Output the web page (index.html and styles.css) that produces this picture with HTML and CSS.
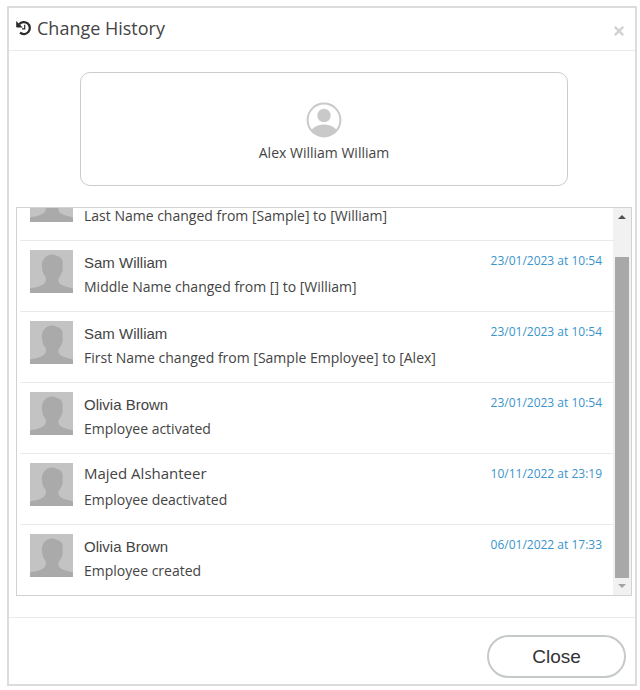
FILE: index.html
```html
<!DOCTYPE html>
<html lang="en">
<head>
  <meta charset="utf-8">
  <title>Change History</title>
  <meta name="viewport" content="width=device-width, initial-scale=1.0">
  <link rel="stylesheet" href="styles.css">
</head>
<body>
  <svg width="0" height="0" class="sprite" aria-hidden="true">
    <symbol id="avatar" viewBox="0 0 43 43">
      <rect width="43" height="43" fill="#c3c3c3"/>
      <path fill="#aaa" d="M0 43v-4.500c4-1 9-1.500 12-3.500 4-2 4.500-5 3.500-8.500-2-2-3-4.500-3.300-7.500C10.500 11 15 5 21.500 4.500c2.500 0 4 .5 5 1.500 5 .5 7 4.500 6 9.500.5 4 0 7-1.500 9-1 2-2 3-2.500 4-.5 3 .5 4.500 2.500 6 3 2 8 2.500 12 4V43z"/>
    </symbol>
  </svg>

  <div class="modal" role="dialog" aria-labelledby="modal-title">
    <header class="modal-header">
      <h1 class="modal-title" id="modal-title">
        <svg class="history-icon" viewBox="0 0 16 16" aria-hidden="true">
          <path fill="none" stroke="#2b2b2b" stroke-width="2.300" d="M3.200 4.200A6 6 0 1 1 4 12.700"/>
          <path fill="#2b2b2b" d="M.2 1.100v5.600q0 .7.8.7h5.800z"/>
          <path fill="none" stroke="#2b2b2b" stroke-width="1.200" d="M8.700 4.800v4H6"/>
        </svg>
        Change History
      </h1>
      <button class="dismiss" type="button" aria-label="Dismiss">
        <svg viewBox="0 0 10 10" width="10" height="10">
          <path stroke="#d2d2d2" stroke-width="2.400" d="M.8.8l8.400 8.400M9.200.8L.8 9.200"/>
        </svg>
      </button>
    </header>

    <main class="modal-body">
      <section class="employee">
        <svg class="employee-icon" viewBox="0 0 36 36" aria-hidden="true">
          <clipPath id="ring"><circle cx="18" cy="18" r="16.500"/></clipPath>
          <circle cx="18" cy="18" r="16.400" fill="#fff" stroke="#c9c9c9" stroke-width="2"/>
          <circle cx="18" cy="13.500" r="6.700" fill="#c9c9c9"/>
          <ellipse cx="18" cy="33" rx="14" ry="10.500" fill="#c9c9c9" clip-path="url(#ring)"/>
        </svg>
        <p class="employee-name">Alex William William</p>
      </section>

      <div class="history">
        <ul class="history-list">
          <li class="entry">
            <svg class="avatar"><use href="#avatar"/></svg>
            <div class="entry-text">
              <p class="entry-detail">Last Name changed from [Sample] to [William]</p>
            </div>
          </li>
          <li class="entry">
            <svg class="avatar"><use href="#avatar"/></svg>
            <div class="entry-text">
              <p class="entry-name">Sam William</p>
              <p class="entry-detail">Middle Name changed from [] to [William]</p>
            </div>
            <time class="entry-date">23/01/2023 at 10:54</time>
          </li>
          <li class="entry">
            <svg class="avatar"><use href="#avatar"/></svg>
            <div class="entry-text">
              <p class="entry-name">Sam William</p>
              <p class="entry-detail">First Name changed from [Sample Employee] to [Alex]</p>
            </div>
            <time class="entry-date">23/01/2023 at 10:54</time>
          </li>
          <li class="entry">
            <svg class="avatar"><use href="#avatar"/></svg>
            <div class="entry-text">
              <p class="entry-name">Olivia Brown</p>
              <p class="entry-detail">Employee activated</p>
            </div>
            <time class="entry-date">23/01/2023 at 10:54</time>
          </li>
          <li class="entry">
            <svg class="avatar"><use href="#avatar"/></svg>
            <div class="entry-text">
              <p class="entry-name entry-name-open">Majed Alshanteer</p>
              <p class="entry-detail">Employee deactivated</p>
            </div>
            <time class="entry-date">10/11/2022 at 23:19</time>
          </li>
          <li class="entry">
            <svg class="avatar"><use href="#avatar"/></svg>
            <div class="entry-text">
              <p class="entry-name">Olivia Brown</p>
              <p class="entry-detail">Employee created</p>
            </div>
            <time class="entry-date">06/01/2022 at 17:33</time>
          </li>
        </ul>
        <div class="scrollbar" aria-hidden="true">
          <svg class="arrow" viewBox="0 0 8 4"><path fill="#505050" d="M0 4l4-4 4 4z"/></svg>
          <div class="thumb"></div>
          <svg class="arrow" viewBox="0 0 8 4"><path fill="#a3a3a3" d="M0 0h8L4 4z"/></svg>
        </div>
      </div>
    </main>

    <footer class="modal-footer">
      <button class="close-button" type="button">Close</button>
    </footer>
  </div>
</body>
</html>
```
FILE: styles.css
```css
* {
  box-sizing: border-box;
}

body {
  margin: 0;
  padding: 6px 3px 4px 7px;
  background: #fff;
  color: #444;
  font-family: "Open Sans", sans-serif;
  font-size: 14px;
}

h1, p, ul {
  margin: 0;
  padding: 0;
}

.sprite {
  position: absolute;
}

.modal {
  border: 2px solid #dcdcdc;
}

.modal-header {
  display: flex;
  align-items: center;
  justify-content: space-between;
  height: 43px;
  padding: 0 11px 3px 7px;
  border-bottom: 1px solid #eaeaea;
}

.modal-title {
  display: flex;
  align-items: center;
  gap: 5px;
  font-size: 18px;
  font-weight: 400;
  line-height: 24px;
}

.history-icon {
  width: 16px;
  height: 16px;
}

.dismiss {
  display: flex;
  padding: 6px 0 0;
  border: none;
  background: none;
  cursor: pointer;
}

.modal-body {
  padding: 21px 3px 21px 7px;
}

.employee {
  display: flex;
  flex-direction: column;
  align-items: center;
  margin: 0 64px 21px;
  padding: 29px 0 21px;
  border: 1px solid #ccc;
  border-radius: 10px;
}

.employee-icon {
  width: 36px;
  height: 36px;
}

.employee-name {
  margin-top: 4px;
  line-height: 22px;
}

.history {
  display: flex;
  height: 389px;
  border: 1px solid #d2d2d2;
}

/* scrolled to the oldest entry */
.history-list {
  display: flex;
  flex: 1;
  flex-direction: column;
  justify-content: flex-end;
  overflow: hidden;
  padding-left: 3px;
  list-style: none;
}

.entry {
  display: flex;
  flex-shrink: 0;
  height: 71px;
  padding: 9px 11px 0 10px;
  border-top: 1px solid #eaeaea;
}

.avatar {
  width: 43px;
  height: 43px;
}

.entry-text {
  display: flex;
  flex: 1;
  flex-direction: column;
  justify-content: flex-end;
  height: 48px;
  padding-left: 11px;
}

.entry-name {
  margin-bottom: 1px;
  font-family: "Liberation Sans", Arial, sans-serif;
  font-size: 15px;
  line-height: 24px;
}

.entry-name-open {
  margin-bottom: 4px;
  font-family: "Open Sans", sans-serif;
}

.entry-detail {
  line-height: 22px;
}

.entry-date {
  padding-top: 2px;
  color: #3a94cb;
  font-size: 12px;
  line-height: 18px;
}

.scrollbar {
  display: flex;
  flex-direction: column;
  align-items: center;
  gap: 6px;
  width: 18px;
  padding: 7px 0;
  background: #f1f1f1;
}

.arrow {
  width: 8px;
  height: 4px;
}

.thumb {
  flex: 1;
  width: 14px;
  margin-top: 32px;
  background: #a8a8a8;
}

.modal-footer {
  display: flex;
  justify-content: flex-end;
  padding: 17px 9px 6px;
  border-top: 1px solid #eaeaea;
}

.close-button {
  width: 139px;
  height: 43px;
  border: 2px solid #c5cac9;
  border-radius: 22px;
  background: #fff;
  color: #333;
  font-family: "Liberation Sans", Arial, sans-serif;
  font-size: 19px;
  cursor: pointer;
}
```
